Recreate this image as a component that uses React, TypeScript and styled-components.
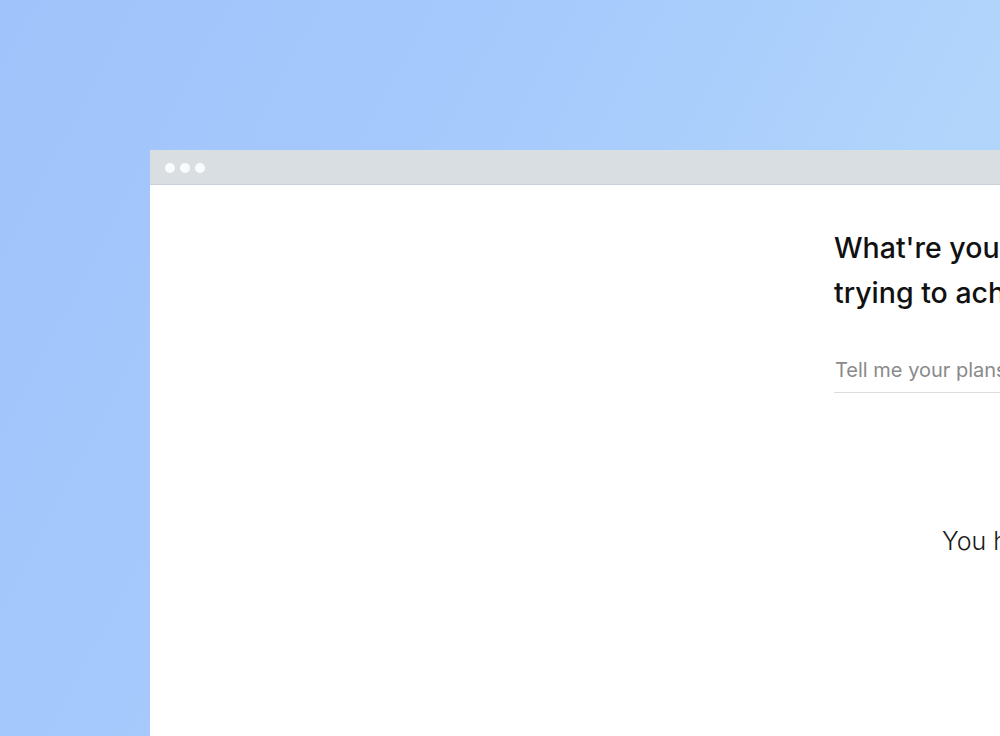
import React from "react";
import styled, { createGlobalStyle } from "styled-components";

const Global = createGlobalStyle`
  html, body { margin: 0; padding: 0; }
  body { font-family: Inter, "Noto Sans", sans-serif; overflow: hidden; }
`;

const Backdrop = styled.div`
  width: 1000px;
  height: 736px;
  overflow: hidden;
  box-sizing: border-box;
  padding: 150px 0 0 150px;
  background: linear-gradient(118deg, #a0c3fb 0%, #a6cafc 40%, #b9ddfa 100%);
`;

const Window = styled.div`
  width: 1300px;
  height: 800px;
  background: #ffffff;
  display: flex;
  flex-direction: column;
`;

const TitleBar = styled.div`
  flex: none;
  box-sizing: border-box;
  height: 35px;
  background: #d9dee3;
  border-bottom: 1px solid #c9d0d8;
  display: flex;
  align-items: center;
  gap: 5px;
  padding: 2px 0 0 15px;
`;

const Dot = styled.span`
  width: 10px;
  height: 10px;
  border-radius: 50%;
  background: #fafbfc;
`;

const Body = styled.div`
  display: grid;
  grid-template-columns: 684px 1fr;
`;

const Side = styled.div``;

const Main = styled.div`
  display: flex;
  flex-direction: column;
  padding-top: 40px;
`;

const Heading = styled.h1`
  margin: 0;
  font-family: Inter, "Noto Sans", sans-serif;
  font-size: 28.5px;
  font-weight: 500;
  line-height: 45px;
  color: #111111;
  white-space: nowrap;
`;

const Field = styled.input`
  margin-top: 43px;
  width: 400px;
  border: none;
  border-bottom: 1px solid #dddddd;
  padding: 0 0 10px 1px;
  font-family: Inter, "Noto Sans", sans-serif;
  font-size: 20px;
  color: #222;
  outline: none;
  background: transparent;
  &::placeholder { color: #8a8a8a; }
`;

const Note = styled.p`
  margin: 133px 0 0 108px;
  font-family: Inter, "Noto Sans", sans-serif;
  font-size: 25px;
  font-weight: 300;
  color: #1a1a1a;
  white-space: nowrap;
`;

export default function App() {
  return (
    <>
      <Global />
      <Backdrop>
        <Window>
          <TitleBar>
            <Dot />
            <Dot />
            <Dot />
          </TitleBar>
          <Body>
            <Side />
            <Main>
              <Heading>
                What're you
                <br />
                trying to achieve?
              </Heading>
              <Field placeholder="Tell me your plans" />
              <Note>You have a plan</Note>
            </Main>
          </Body>
        </Window>
      </Backdrop>
    </>
  );
}
